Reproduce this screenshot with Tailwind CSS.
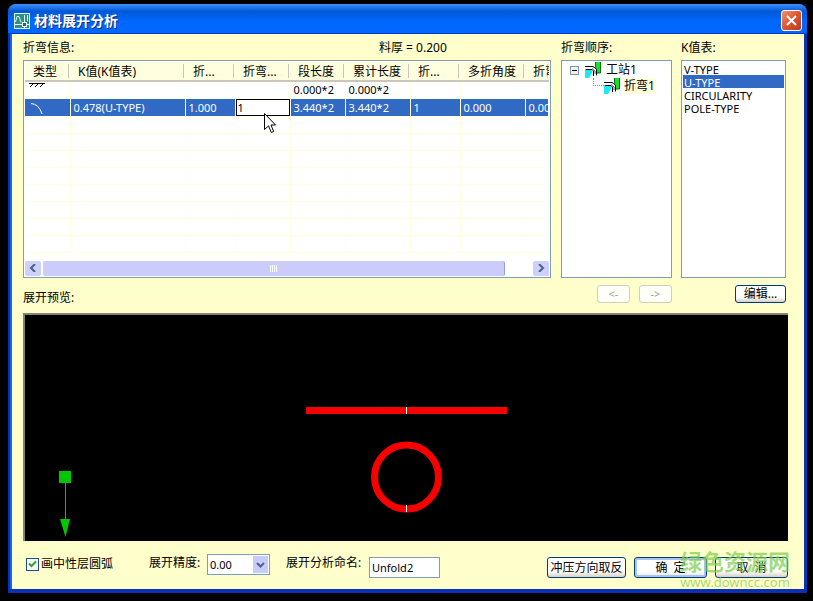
<!DOCTYPE html>
<html lang="zh-CN">
<head>
    <meta charset="UTF-8">
    <meta name="viewport" content="width=device-width, initial-scale=1.0">
    <title>材料展开分析</title>
    <script src="https://cdn.jsdelivr.net/npm/@tailwindcss/browser@4"></script>
</head>
<body class="bg-black font-['Noto_Sans','Noto_Sans_CJK_SC',sans-serif] text-xs leading-4 text-black">
    <div class="flex h-screen flex-col pt-1 pr-[6px] pb-2 pl-2">
        <div class="relative flex min-h-0 flex-1 flex-col rounded-t-lg bg-[#0a32b8] pr-[3px] pb-1 pl-[2px]">

            <!-- Title bar -->
            <header class="-mr-[3px] -ml-[2px] flex h-[30px] shrink-0 items-center rounded-t-lg border-b border-[#0038c0] bg-linear-to-b from-[#3c92ff] via-[#0058d4] via-25% to-[#0068ff] to-60% pt-1 pr-[5px] pl-[6px]">
                <svg class="size-4 shrink-0" viewBox="0 0 16 16">
                    <rect width="16" height="16" fill="#e4f4ee" />
                    <rect x="1" y="1" width="14" height="14" fill="#2f8f86" />
                    <path d="M1.500 9 L3 3.500 H5 L7 9.500 M10.500 2 V9 M13.500 2 V8" fill="none" stroke="#d8f8ec" />
                    <path d="M1 11.500 H9 M13 11.500 H15 M10.500 13 V15" stroke="#e8fff8" />
                    <rect x="8.500" y="9.500" width="4" height="4" fill="#176b66" stroke="#fff" />
                </svg>
                <h1 class="ml-1 flex-1 text-sm font-bold text-white [text-shadow:1px_1px_0_#0a2a80]">材料展开分析</h1>
                <button type="button" aria-label="关闭" class="flex size-[21px] items-center justify-center rounded-[3px] border border-white bg-linear-to-br from-[#f09070] via-[#dd5530] to-[#b83a18]">
                    <svg class="size-[13px]" viewBox="0 0 13 13">
                        <path d="M2 2 L11 11 M11 2 L2 11" stroke="#fff" stroke-width="2" />
                    </svg>
                </button>
            </header>

            <main class="flex min-h-0 flex-1 flex-col border-l-2 border-[#0f66ea] bg-[#ffffcc] pr-4 pl-[11px]">

                <!-- Lists -->
                <div class="flex pt-[6px] pr-[2px]">
                    <section class="relative min-w-0 flex-1">
                        <div class="mb-1 flex h-4">
                            <span class="w-[356px]">折弯信息:</span>
                            <span>料厚 = 0.200</span>
                        </div>
                        <div class="h-[218px] overflow-hidden border border-[#7f9db9] bg-white px-px">
                            <table class="w-full table-fixed border-collapse text-[11px] whitespace-nowrap">
                                <colgroup>
                                    <col class="w-[45px]">
                                    <col class="w-[115px]">
                                    <col class="w-[50px]">
                                    <col class="w-[55px]">
                                    <col class="w-[55px]">
                                    <col class="w-[65px]">
                                    <col class="w-[50px]">
                                    <col class="w-[65px]">
                                    <col>
                                </colgroup>
                                <thead class="border-b-2 border-[#cbc7b8] bg-[#ffffdf] text-xs">
                                    <tr id="headRow" class="h-[20px]"></tr>
                                </thead>
                                <tbody id="bendRows"></tbody>
                            </table>
                        </div>
                        <!-- Horizontal scroll bar -->
                        <div class="absolute right-px bottom-px left-px flex h-[18px] items-center bg-white px-px">
                            <button type="button" aria-label="向左" class="flex h-[15px] w-4 items-center justify-center rounded-xs bg-[#ccd0fa]">
                                <svg class="size-2" viewBox="0 0 8 8"><path d="M6 0 L2 4 L6 8" fill="none" stroke="#4d6185" stroke-width="2" /></svg>
                            </button>
                            <div class="ml-[2px] flex h-[15px] w-[462px] items-center justify-center gap-px rounded-xs border-r border-[#8ea4d8] bg-[#ccccfa]">
                                <i class="h-[7px] w-px bg-white"></i><i class="h-[7px] w-px bg-white"></i><i class="h-[7px] w-px bg-white"></i><i class="h-[7px] w-px bg-white"></i>
                            </div>
                            <button type="button" aria-label="向右" class="ml-auto flex h-[15px] w-4 items-center justify-center rounded-xs bg-[#ccd0fa]">
                                <svg class="size-2" viewBox="0 0 8 8"><path d="M2 0 L6 4 L2 8" fill="none" stroke="#4d6185" stroke-width="2" /></svg>
                            </button>
                        </div>
                        <!-- Mouse pointer -->
                        <svg class="absolute top-[73px] left-[241px] h-[21px] w-3" viewBox="0 0 12 21">
                            <path d="M.5 .5 V16.500 L4.500 12.800 L7.300 19.500 L9.700 18.500 L7 12 H11.500 Z" fill="#fff" stroke="#000" />
                        </svg>
                    </section>

                    <section class="ml-[10px] w-[111px]">
                        <h2 class="mb-1 h-4">折弯顺序:</h2>
                        <ul class="h-[218px] border border-[#7f9db9] bg-white pt-px pl-2">
                            <li>
                                <div class="flex h-4 items-center">
                                    <button type="button" aria-label="折叠" class="mr-[6px] flex size-[9px] items-center justify-center border border-[#7b95b5] bg-[#f2f0ea]">
                                        <i class="h-px w-[5px] bg-black"></i>
                                    </button>
                                    <svg class="bend-icon size-4" viewBox="0 0 16 16"></svg>
                                    <span class="ml-1 px-px">工站1</span>
                                </div>
                                <ul>
                                    <li class="flex h-4 items-center pl-[23px]">
                                        <i class="h-2 w-[11px] self-start border-b border-l border-dotted border-[#909090]"></i>
                                        <svg class="bend-icon size-4" viewBox="0 0 16 16"></svg>
                                        <span class="ml-[3px] bg-[#ffffdc] px-px">折弯1</span>
                                    </li>
                                </ul>
                            </li>
                        </ul>
                    </section>

                    <section class="ml-[9px] w-[105px]">
                        <label for="kTable" class="mb-1 block h-4">K值表:</label>
                        <select id="kTable" size="4" class="block h-[218px] w-full overflow-hidden border border-[#7f9db9] bg-white p-px text-[11px] outline-none">
                            <option class="h-[13px] min-h-0 px-px py-0 leading-[13px]">V-TYPE</option>
                            <option class="h-[13px] min-h-0 px-px py-0 leading-[13px] checked:bg-[#316ac5] checked:bg-linear-to-r checked:from-[#316ac5] checked:to-[#316ac5] checked:text-white" selected>U-TYPE</option>
                            <option class="h-[13px] min-h-0 px-px py-0 leading-[13px]">CIRCULARITY</option>
                            <option class="h-[13px] min-h-0 px-px py-0 leading-[13px]">POLE-TYPE</option>
                        </select>
                    </section>
                </div>

                <div class="mt-[7px] flex h-[18px] text-[11px]">
                    <h2 class="mt-[5px] flex-1 text-xs">展开预览:</h2>
                    <button type="button" disabled class="flex w-[33px] items-center justify-center rounded-[3px] border border-[#d0cdb8] bg-[#fffffa] text-[#a5a290]">&lt;-</button>
                    <button type="button" disabled class="ml-[9px] flex w-[33px] items-center justify-center rounded-[3px] border border-[#d0cdb8] bg-[#fffffa] text-[#a5a290]">-&gt;</button>
                    <button type="button" class="mr-[2px] ml-[63px] flex w-[51px] items-center justify-center rounded-[3px] border border-[#003c74] bg-linear-to-b from-white from-70% to-[#d6d0c5] text-xs">编辑...</button>
                </div>

                <!-- Unfold preview -->
                <div class="mt-[10px] min-h-0 flex-1 border-t-2 border-l-2 border-[#85836f] bg-black">
                    <svg class="block size-full" viewBox="0 0 763 226">
                        <rect x="281" y="92" width="201" height="7" fill="#f80000" />
                        <circle cx="381.500" cy="162" r="32" fill="none" stroke="#f80000" stroke-width="7" />
                        <path d="M381.500 92 V99 M381.500 190 V197" stroke="#fff" />
                        <rect x="34" y="156" width="12" height="12" fill="#00c800" />
                        <rect x="40" y="168" width="1" height="38" fill="#00c800" />
                        <path d="M35 204 H45 L40.500 222 Z" fill="#00c800" />
                    </svg>
                </div>

                <footer class="relative flex h-12 shrink-0 items-start pt-[13px]">
                    <label class="ml-[3px] flex h-5 w-[123px] items-center">
                        <input type="checkbox" checked class="peer size-[13px] appearance-none border border-[#1c5180] bg-[#f4f4f0]">
                        <svg class="-ml-[11px] size-[9px]" viewBox="0 0 9 9"><path d="M1 3.500 L3.500 6 L8 1.500" fill="none" stroke="#3f9a3f" stroke-width="2" /></svg>
                        <span class="ml-1">画中性层圆弧</span>
                    </label>
                    <label for="precision" class="w-[58px] pt-px">展开精度:</label>
                    <div class="relative w-[63px]">
                        <select id="precision" class="h-[21px] w-full appearance-none border border-[#7f9db9] bg-white pl-[2px] text-[11px]">
                            <option>0.00</option>
                            <option>0.000</option>
                        </select>
                        <span class="pointer-events-none absolute top-[2px] right-[2px] flex h-[17px] w-[15px] items-center justify-center bg-[#c8ccf8]">
                            <svg class="h-[6px] w-[9px]" viewBox="0 0 9 6"><path d="M1 1 L4.500 4.500 L8 1" fill="none" stroke="#4d6185" stroke-width="2" /></svg>
                        </span>
                    </div>
                    <label for="unfoldName" class="ml-4 w-[83px] pt-px">展开分析命名:</label>
                    <input id="unfoldName" type="text" value="Unfold2" class="mt-[3px] h-[21px] w-[71px] border border-[#7f9db9] bg-white px-[2px] text-[11px]">
                    <div class="mt-[3px] ml-auto flex h-[21px] gap-2">
                        <button type="button" class="w-[79px] rounded-[3px] border border-[#003c74] bg-linear-to-b from-white from-70% to-[#d6d0c5]">冲压方向取反</button>
                        <button type="button" class="w-[73px] rounded-[3px] border border-[#003c74] bg-linear-to-b from-white from-70% to-[#e6e4dc] inset-ring-2 inset-ring-[#a8c4f0]">确&nbsp; 定</button>
                        <button type="button" class="w-[73px] rounded-[3px] border border-[#003c74] bg-linear-to-b from-white from-70% to-[#d6d0c5]">取&nbsp; 消</button>
                    </div>
                    <!-- Site mark -->
                    <div class="pointer-events-none absolute top-2 -right-[2px] text-center text-[#7ccb45]/70">
                        <div class="text-[22px] leading-6 font-bold">绿色资源网</div>
                        <div class="text-[13px] leading-[18px]">www.downcc.com</div>
                    </div>
                </footer>
            </main>
        </div>
    </div>

    <script>
        const headers = ['类型', 'K值(K值表)', '折...', '折弯...', '段长度', '累计长度', '折...', '多折角度', '折弯...'];
        const rows = [
            ['flat', '', '', '', '0.000*2', '0.000*2', '', '', ''],
            ['arc', '0.478(U-TYPE)', '1.000', 'edit', '3.440*2', '3.440*2', '1', '0.000', '0.000'],
        ];
        const cells = {
            flat: '<svg class="h-2 w-5" viewBox="0 0 20 8"><path d="M4 1.500 H20 M8 2 L5 5 M13 2 L10 5 M18 2 L15 5" stroke="#000" fill="none" /></svg>',
            arc: '<svg class="h-4 w-5" viewBox="0 0 20 16"><path d="M6 4.500 Q14 5 17 15" stroke="#fff" fill="none" /></svg>',
            edit: '<input type="text" value="1" aria-label="折弯" class="block h-[17px] w-full border border-black bg-white px-px text-[11px] text-black outline-none">',
        };

        document.getElementById('headRow').innerHTML = headers.map(h =>
            `<th class="overflow-hidden p-0 text-left font-normal"><div class="mr-px h-[14px] border-r border-[#cbc7b8] pl-2 leading-4">${h}</div></th>`
        ).join('');

        const body = document.getElementById('bendRows');
        for (let r = 0; r < 10; r++) {
            const row = rows[r] || Array(9).fill('');
            const tr = document.createElement('tr');
            tr.className = r === 1 ? 'h-[17px] bg-[#316ac5] text-white' : 'h-[17px]';
            tr.innerHTML = row.map(c =>
                `<td class="overflow-hidden border-r border-b border-[#ffffe1] leading-4 ${c in cells ? 'p-0 align-top' : 'py-0 pr-0 pl-[3px]'}">${cells[c] || c}</td>`
            ).join('');
            body.appendChild(tr);
        }

        // Sheet-metal icon shared by both tree levels
        document.querySelectorAll('.bend-icon').forEach(icon => {
            icon.innerHTML = `
                <rect x="10" y="0" width="6" height="11" fill="#18e028" />
                <path d="M10.500 0 V5 M15.500 0 V11 H12" fill="none" stroke="#087010" />
                <path d="M0 7 H7 V11 L4 16 H0 Z" fill="#20e8f0" />
                <path d="M1 4.500 H8 L11.500 7 V13.500 H8.500 V9 L7 7.500 H1 Z" fill="#fff" />
                <path d="M0 4.500 H8 L11.500 7 V13.500 M1 7.500 H7 L8.500 9 V14" fill="none" stroke="#000" />
                <path d="M7 6.500 L10 9 V12" fill="none" stroke="#606060" />`;
        });
    </script>
</body>
</html>
